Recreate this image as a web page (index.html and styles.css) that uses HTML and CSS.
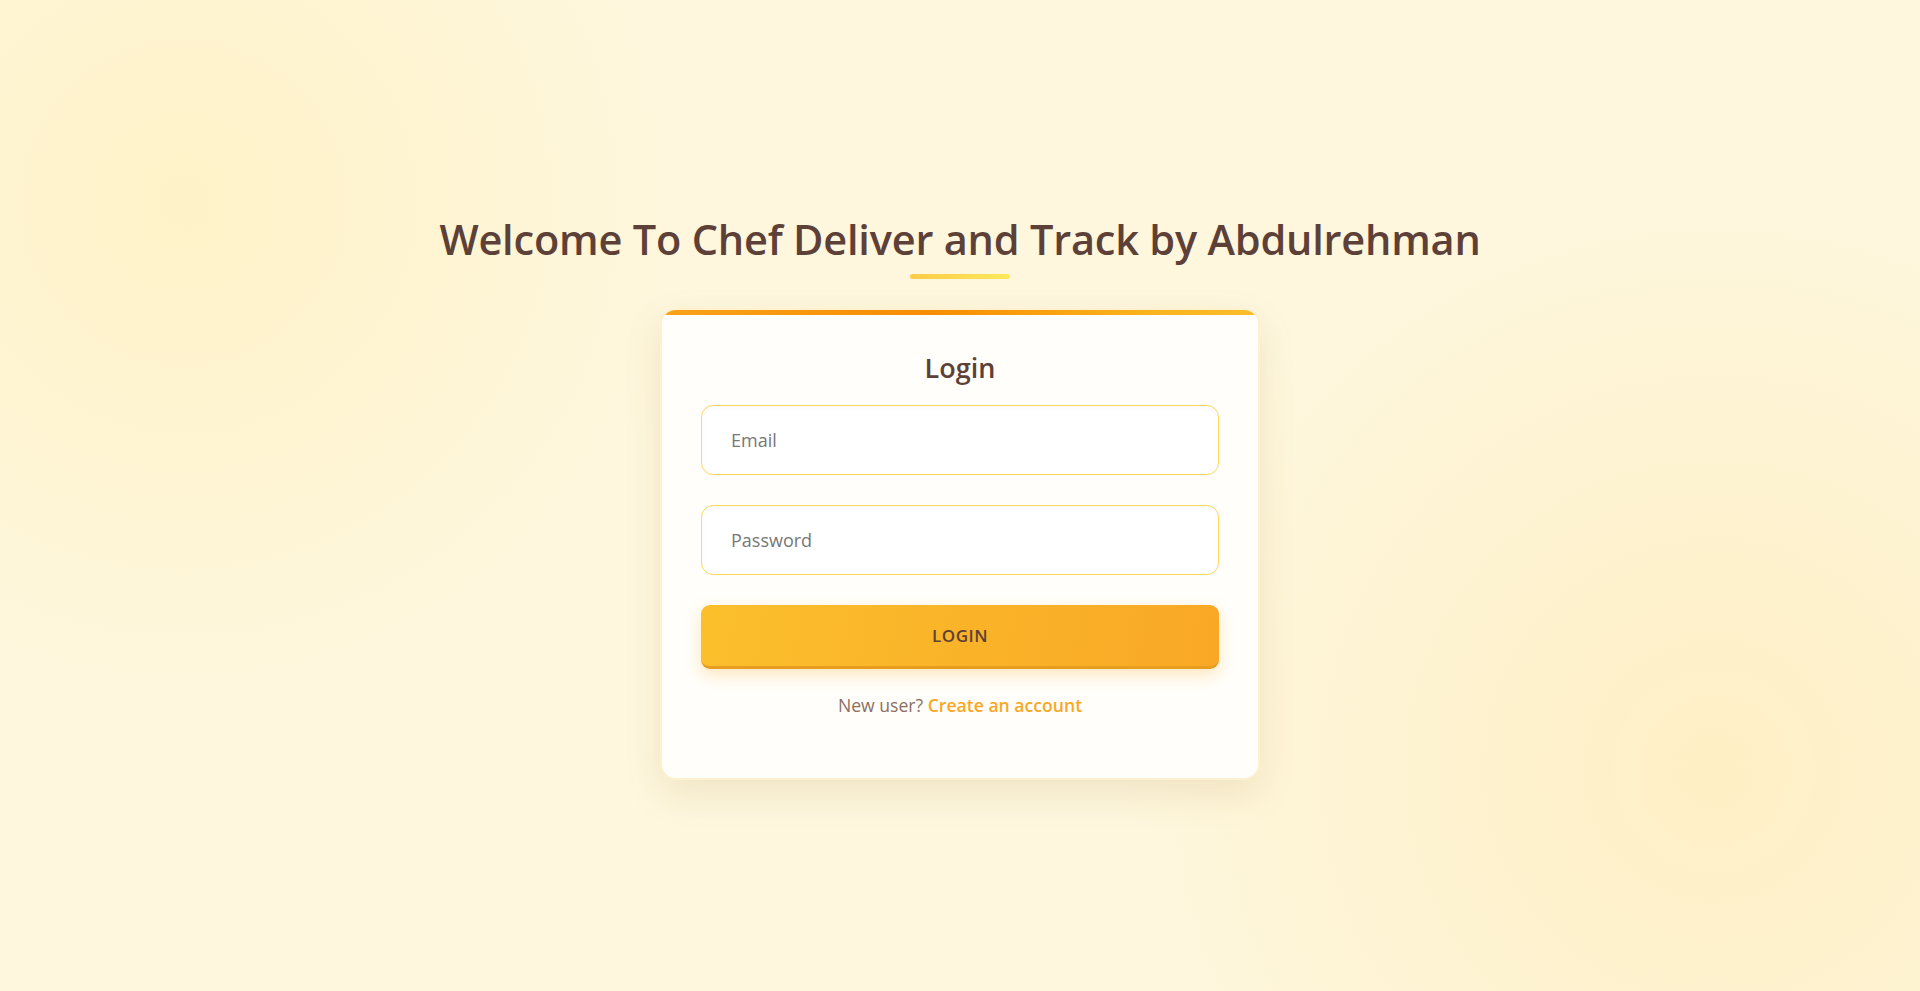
FILE: index.html
```html
<!DOCTYPE html>
<html lang="en">
<head>
<meta charset="utf-8">
<title>Chef Deliver and Track - Login</title>
<link rel="stylesheet" href="styles.css">
</head>
<body>
  <main class="page">
    <h1 class="title">Welcome To Chef Deliver and Track by Abdulrehman</h1>
    <div class="title-bar"></div>
    <section class="card">
      <div class="card-bar"></div>
      <div class="card-body">
        <h2 class="card-title">Login</h2>
        <form class="form">
          <input class="field" type="email" placeholder="Email">
          <input class="field" type="password" placeholder="Password">
          <button class="btn" type="button">LOGIN</button>
        </form>
        <p class="signup">New user? <a class="signup-link" href="#">Create an account</a></p>
      </div>
    </section>
  </main>
</body>
</html>
```

FILE: styles.css
```css
* { box-sizing: border-box; }

html, body { margin: 0; padding: 0; }

body {
  min-height: 100vh;
  font-family: "Open Sans", "Noto Sans", sans-serif;
  color: #5d4037;
  background:
    radial-gradient(circle at 184px 202px, rgba(255, 239, 185, 0.6) 0, rgba(255, 239, 185, 0.3) 260px, rgba(255, 239, 185, 0) 520px),
    radial-gradient(circle at 1714px 770px, rgba(255, 234, 180, 0.6) 0, rgba(255, 234, 180, 0.3) 300px, rgba(255, 234, 180, 0) 600px),
    #fef7de;
}

.page {
  min-height: 100vh;
  padding-top: 4px;
  display: flex;
  flex-direction: column;
  align-items: center;
  justify-content: center;
}

.title {
  margin: 0;
  font-size: 41.5px;
  line-height: 1.2;
  font-weight: 600;
  color: #5d4037;
  letter-spacing: -0.2px;
}

.title-bar {
  width: 100px;
  height: 5px;
  margin-top: 9px;
  border-radius: 3px;
  background: linear-gradient(90deg, #fccb48, #ffe95a);
}

.card {
  margin-top: 29px;
  width: 600px;
  background: #fffefa;
  border: 2px solid #fdf1cf;
  border-radius: 16px;
  overflow: hidden;
  box-shadow: 0 14px 36px rgba(150, 110, 30, 0.13);
}

.card-bar {
  height: 5px;
  background: linear-gradient(90deg, #f8a21a 0%, #f78d04 45%, #fbb11c 80%, #fdbd2c 100%);
}

.card-body {
  padding: 37px 39px 60px;
  display: flex;
  flex-direction: column;
}

.card-title {
  margin: 0 0 21px;
  text-align: center;
  font-size: 27px;
  line-height: 1.2;
  font-weight: 600;
  color: #5d4037;
}

.form {
  display: flex;
  flex-direction: column;
  gap: 30px;
}

.field {
  width: 100%;
  padding: 22px 29px;
  font-family: inherit;
  font-size: 18px;
  line-height: 24px;
  color: #5d4037;
  background: #ffffff;
  border: 1.5px solid #fdd85a;
  border-radius: 12px;
  outline: none;
  box-shadow: inset 0 2px 4px rgba(0, 0, 0, 0.03);
}

.field::placeholder { color: #777777; }

.btn {
  height: 64px;
  width: 100%;
  border: 0;
  border-bottom: 3px solid #e79d1d;
  border-radius: 9px;
  font-family: inherit;
  font-size: 17px;
  font-weight: 600;
  letter-spacing: 0.5px;
  color: #5d4037;
  background: linear-gradient(100deg, #fbbf2c 0%, #f9a826 100%);
  box-shadow: 0 6px 16px rgba(249, 168, 37, 0.28);
  cursor: pointer;
}

.signup {
  margin: 23px 0 0;
  text-align: center;
  font-size: 17.6px;
  line-height: 1.5;
  color: #8d6e63;
}

.signup-link {
  color: #f9a825;
  font-weight: 600;
  text-decoration: none;
}
```
